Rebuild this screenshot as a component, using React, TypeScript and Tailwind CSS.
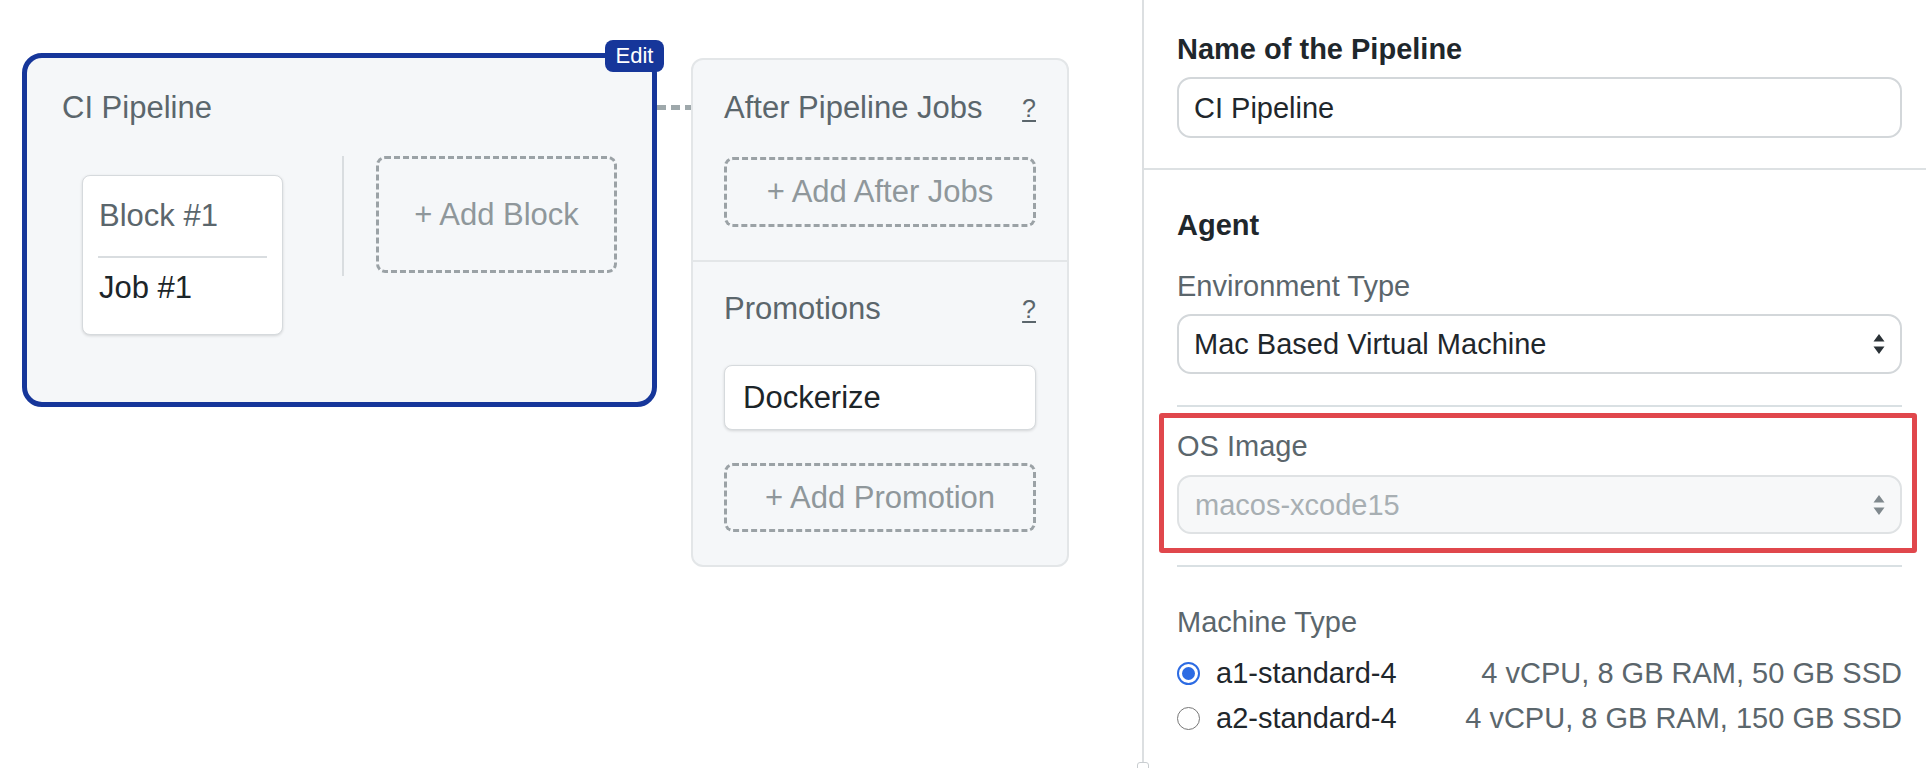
import React from 'react';

function SelectArrows({ muted }: { muted?: boolean }) {
  return (
    <svg width="12" height="20" viewBox="0 0 12 20" className="shrink-0">
      <path d="M6 0L11.5 7.5H0.5Z M6 20L0.5 12.5H11.5Z" fill={muted ? '#80898e' : '#2b3237'} />
    </svg>
  );
}

function DashedButton({ label, className }: { label: string; className?: string }) {
  return (
    <div
      className={`flex items-center justify-center rounded-[9px] border-[3px] border-dashed border-[#9ba2a6] text-[31px] leading-[36px] text-[#8f979b] ${className ?? ''}`}
    >
      {label}
    </div>
  );
}

function PanelHeader({ title }: { title: string }) {
  return (
    <div className="flex items-center justify-between">
      <span className="text-[31px] leading-[36px] text-[#5b666c]">{title}</span>
      <span className="text-[25px] leading-[28px] text-[#5b666c] underline underline-offset-[3px]">?</span>
    </div>
  );
}

function Radio({ checked }: { checked?: boolean }) {
  if (checked) {
    return (
      <div className="h-[23px] w-[23px] shrink-0 rounded-full border-2 border-[#2c6be3] bg-white p-[3px]">
        <div className="h-full w-full rounded-full bg-[#2c6be3]" />
      </div>
    );
  }
  return <div className="h-[23px] w-[23px] shrink-0 rounded-full border-[1.5px] border-[#777] bg-white" />;
}

function MachineRow({ name, spec, checked }: { name: string; spec: string; checked?: boolean }) {
  return (
    <div className="flex h-[34px] items-center">
      <Radio checked={checked} />
      <span className="ml-[16px] text-[29px] leading-[34px] text-[#1f272c]">{name}</span>
      <span className="ml-auto text-[29px] leading-[34px] text-[#5b666c]">{spec}</span>
    </div>
  );
}

export default function App() {
  return (
    <div className="flex h-[768px] w-full overflow-hidden bg-white font-['Liberation_Sans',Arial,sans-serif]">
      {/* canvas */}
      <div className="flex w-[1142px] shrink-0 items-start">
        <div className="relative ml-[22px] mt-[53px] h-[354px] w-[635px] shrink-0 rounded-[20px] border-[5px] border-[#16369a] bg-[#f5f7f9] pl-[35px] pt-[32px]">
          <div className="absolute -right-[12px] -top-[18px] flex h-[32px] w-[59px] items-center justify-center rounded-[8px] bg-[#16369a] text-[22px] leading-none text-white">
            Edit
          </div>
          <div className="text-[31px] leading-[36px] text-[#5b666c]">CI Pipeline</div>
          <div className="mt-[30px] flex items-start pl-[20px]">
            <div className="mt-[19px] h-[160px] w-[201px] shrink-0 rounded-[8px] border border-[#d6dadd] bg-white shadow-[0_1px_3px_rgba(0,0,0,0.14)]">
              <div className="px-[16px] pb-[22px] pt-[22px] text-[31px] leading-[36px] text-[#5b666c]">Block #1</div>
              <div className="mx-[15px] h-[2px] bg-[#d9dde0]" />
              <div className="px-[16px] pt-[12px] text-[31px] leading-[36px] text-[#1c2529]">Job #1</div>
            </div>
            <div className="ml-[59px] h-[120px] w-[2px] shrink-0 bg-[#d9dde0]" />
            <DashedButton label="+ Add Block" className="ml-[32px] h-[117px] w-[241px] shrink-0" />
          </div>
        </div>

        <div className="mt-[105px] h-[5px] w-[34px] shrink-0 bg-[repeating-linear-gradient(90deg,#9ea8ab_0px,#9ea8ab_9px,transparent_9px,transparent_14px)]" />

        <div className="mt-[58px] w-[378px] shrink-0 rounded-[12px] border-2 border-[#e3e6e8] bg-[#f5f7f9]">
          <div className="px-[31px] pb-[33px] pt-[30px]">
            <PanelHeader title="After Pipeline Jobs" />
            <DashedButton label="+ Add After Jobs" className="mt-[31px] h-[70px]" />
          </div>
          <div className="h-[2px] bg-[#e3e6e8]" />
          <div className="px-[31px] pb-[33px] pt-[29px]">
            <PanelHeader title="Promotions" />
            <div className="mt-[38px] flex h-[65px] items-center rounded-[8px] border border-[#d6dadd] bg-white pl-[18px] text-[31px] leading-[36px] text-[#1c2529] shadow-[0_1px_3px_rgba(0,0,0,0.14)]">
              Dockerize
            </div>
            <DashedButton label="+ Add Promotion" className="mt-[33px] h-[69px]" />
          </div>
        </div>
      </div>

      {/* settings panel */}
      <div className="relative h-[768px] flex-1 border-l-2 border-[#dcdfe1] bg-white">
        <div className="absolute -left-[7px] -bottom-[4px] h-[10px] w-[12px] rounded-[3px] border border-[#c9cdd0] bg-white" />

        <div className="pb-[30px] pl-[33px] pr-[24px] pt-[32px]">
          <div className="text-[29px] font-bold leading-[34px] text-[#1f272c]">Name of the Pipeline</div>
          <div className="mt-[11px] flex h-[61px] items-center rounded-[14px] border-2 border-[#d3d7da] bg-white pl-[15px] text-[29px] leading-[34px] text-[#1f272c]">
            CI Pipeline
          </div>
        </div>
        <div className="h-[2px] bg-[#dde1e3]" />

        <div className="pl-[33px] pr-[24px]">
          <div className="pt-[38px] text-[29px] font-bold leading-[34px] text-[#1f272c]">Agent</div>
          <div className="mt-[27px] text-[29px] leading-[34px] text-[#5b666c]">Environment Type</div>
          <div className="mt-[11px] flex h-[60px] items-center justify-between rounded-[14px] border-2 border-[#d3d7da] bg-white pl-[15px] pr-[15px] text-[29px] leading-[34px] text-[#1f272c]">
            <span>Mac Based Virtual Machine</span>
            <SelectArrows />
          </div>
          <div className="mt-[31px] h-[2px] bg-[#d9e0e3]" />

          <div className="relative pb-[31px] pt-[22px]">
            <div className="absolute -left-[18px] -right-[15px] bottom-[12px] top-[6px] rounded-[3px] border-[5px] border-[#e0474c]" />
            <div className="text-[29px] leading-[34px] text-[#5b666c]">OS Image</div>
            <div className="mt-[12px] flex h-[59px] items-center justify-between rounded-[14px] border-2 border-[#dfe2e4] bg-[#f7f8f9] pl-[16px] pr-[15px] text-[29px] leading-[34px] text-[#a8afb3]">
              <span>macos-xcode15</span>
              <SelectArrows muted />
            </div>
          </div>
          <div className="h-[2px] bg-[#d9e0e3]" />

          <div className="pt-[38px] text-[29px] leading-[34px] text-[#5b666c]">Machine Type</div>
          <div className="mt-[17px] flex flex-col gap-[11px]">
            <MachineRow name="a1-standard-4" spec="4 vCPU, 8 GB RAM, 50 GB SSD" checked />
            <MachineRow name="a2-standard-4" spec="4 vCPU, 8 GB RAM, 150 GB SSD" />
          </div>
        </div>
      </div>
    </div>
  );
}
